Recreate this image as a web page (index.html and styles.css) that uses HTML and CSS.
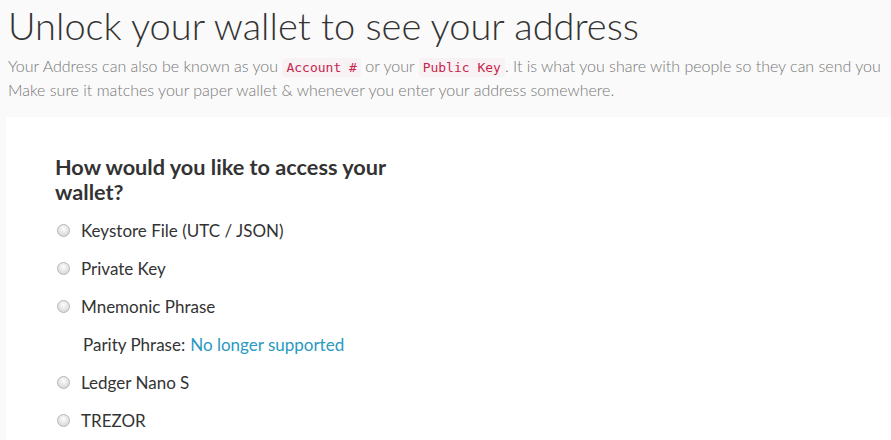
FILE: index.html
```html
<!DOCTYPE html>
<html lang="en">
<head>
  <meta charset="UTF-8" />
  <meta name="viewport" content="width=device-width, initial-scale=1.0" />
  <title>View Wallet Info</title>
  <link rel="stylesheet" href="styles.css">
</head>
<body>
  <section class="intro">
    <h1>Unlock your wallet to see your address</h1>
    <p>Your Address can also be known as you <code>Account #</code> or your <code>Public Key</code>. It is what you share with people so they can send you<br>
    Make sure it matches your paper wallet &amp; whenever you enter your address somewhere.</p>
  </section>

  <section class="panel">
    <div class="access">
      <h2>How would you like to access your wallet?</h2>

      <label class="option"><span class="radio"></span>Keystore File (UTC / JSON)</label>
      <label class="option"><span class="radio"></span>Private Key</label>
      <label class="option"><span class="radio"></span>Mnemonic Phrase</label>
      <div class="note">Parity Phrase: <a href="#">No longer supported</a></div>
      <label class="option"><span class="radio"></span>Ledger Nano S</label>
      <label class="option"><span class="radio"></span>TREZOR</label>
    </div>
  </section>
</body>
</html>
```

FILE: styles.css
```css
body {
  margin: 0;
  font-family: Lato, "Open Sans", sans-serif;
  background: #fafafa;
  color: #333;
  height: 440px;
  overflow: hidden;
}
.intro {
  padding: 0 8px;
  height: 117px;
  white-space: nowrap;
}
h1 {
  margin: 0;
  padding-top: 2px;
  font-size: 38px;
  font-weight: 300;
  line-height: 46px;
  color: #333;
}
.intro p {
  margin: 7px 0 0;
  font-size: 16px;
  font-weight: 300;
  line-height: 22px;
  color: #777;
}
code {
  font-family: "DejaVu Sans Mono", "Liberation Mono", monospace;
  font-size: 13px;
  color: #c7254e;
  background: #f9f2f4;
  padding: 2px 4px;
  border-radius: 3px;
}
.panel {
  margin-left: 6px;
  background: #fff;
  height: 323px;
  box-sizing: border-box;
  padding: 38px 0 0 49px;
  overflow: hidden;
}
.access {
  width: 345px;
}
h2 {
  margin: 0 0 6px;
  font-size: 21.7px;
  font-weight: 700;
  line-height: 25px;
  color: #333;
}
.option, .note {
  display: flex;
  align-items: center;
  height: 38px;
  font-size: 17px;
  color: #333;
}
.radio {
  width: 11px;
  height: 11px;
  margin: 0 11px 0 2px;
  border: 1px solid #b5b5b5;
  border-radius: 50%;
  background: radial-gradient(circle at 50% 35%, #fdfdfd, #dcdcdc 70%);
}
.note {
  padding-left: 28px;
}
.note a {
  margin-left: 5px;
  color: #2a99c0;
  text-decoration: none;
}
```
